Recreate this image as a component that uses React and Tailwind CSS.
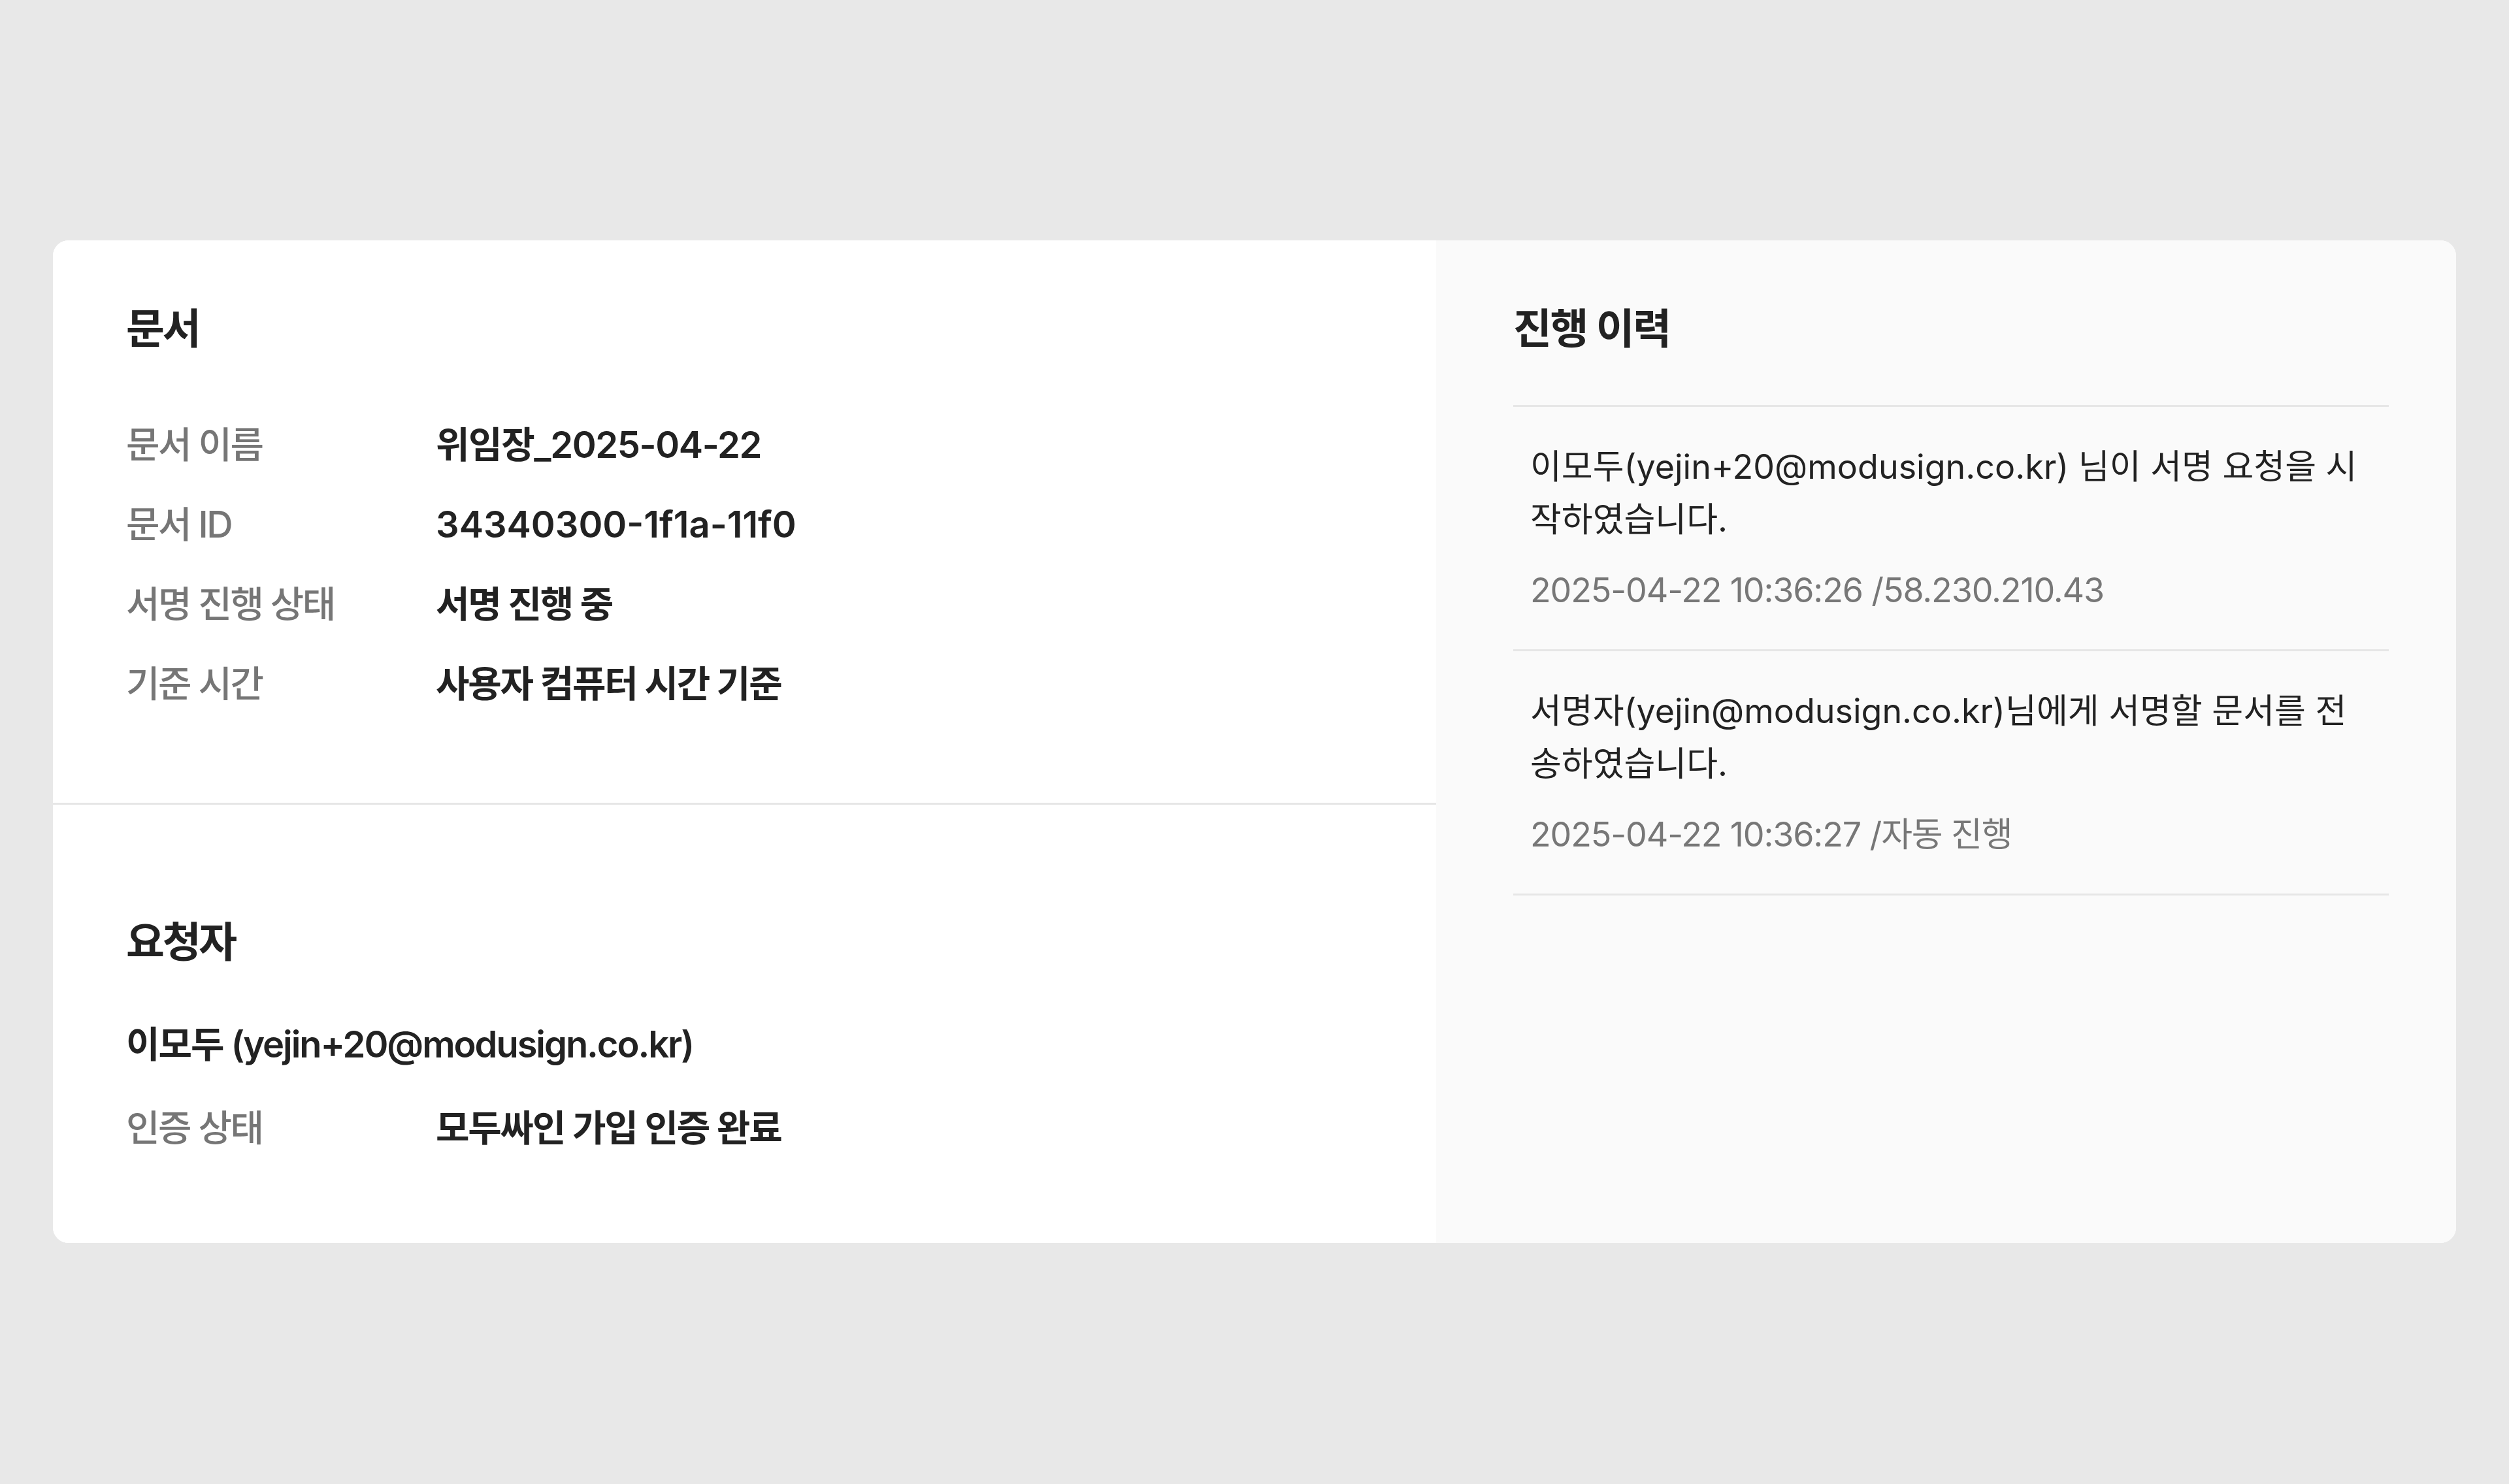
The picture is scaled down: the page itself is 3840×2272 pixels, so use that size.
import React from "react";

const FONT = { fontFamily: 'Inter, "Noto Sans CJK KR", "Noto Sans", sans-serif' };

function Row({ label, value, vt }) {
  return (
    <div className="flex items-center h-[84px]">
      <div className="w-[474px] shrink-0 text-[56px] leading-[84px] font-medium text-[#767676] tracking-[-0.045em]">{label}</div>
      <div className={"text-[56px] leading-[84px] font-semibold text-[#222222] " + vt}>{value}</div>
    </div>
  );
}

function Entry({ lines, meta, last }) {
  return (
    <div className={"border-t-[3px] border-[#e6e6e6] pt-[51px] pb-[50px] px-[26px]" + (last ? " border-b-[3px]" : "")}>
      <div className="text-[52px] leading-[81px] text-[#222222]">
        {lines.map((l, i) => (
          <div key={i} className="whitespace-nowrap">{l}</div>
        ))}
      </div>
      <div className="mt-[27px] text-[52px] leading-[81px] text-[#777777] whitespace-nowrap tracking-[-0.022em]">{meta}</div>
    </div>
  );
}

export default function App() {
  return (
    <div className="min-h-screen bg-[#e8e8e8] px-[81px] pt-[368px]" style={FONT}>
      <div className="flex rounded-[24px] overflow-hidden bg-white">
        <div className="w-[2117px] shrink-0 bg-white">
          <div className="pl-[112px] pr-[112px] pt-[87px] pb-[140px]">
            <h2 className="text-[64px] leading-[96px] font-semibold text-[#222222] tracking-[-0.05em]">문서</h2>
            <div className="mt-[88px] flex flex-col gap-[38px]">
              <Row label="문서 이름" value="위임장_2025-04-22" vt="tracking-[-0.025em]" />
              <Row label="문서 ID" value="34340300-1f1a-11f0" vt="tracking-normal" />
              <Row label="서명 진행 상태" value="서명 진행 중" vt="tracking-[-0.04em]" />
              <Row label="기준 시간" value="사용자 컴퓨터 시간 기준" vt="tracking-[-0.04em]" />
            </div>
          </div>
          <div className="h-[3px] bg-[#e6e6e6]" />
          <div className="pl-[112px] pr-[112px] pt-[162px] pb-[134px]">
            <h2 className="text-[64px] leading-[96px] font-semibold text-[#222222] tracking-[-0.05em]">요청자</h2>
            <div className="mt-[67px] text-[56px] leading-[84px] font-semibold text-[#222222] tracking-[-0.037em]">
              이모두 (yejin+20@modusign.co.kr)
            </div>
            <div className="mt-[44px]">
              <Row label="인증 상태" value="모두싸인 가입 인증 완료" vt="tracking-[-0.04em]" />
            </div>
          </div>
        </div>
        <div className="flex-1 bg-[#fafafa] pl-[118px] pr-[103px] pt-[87px]">
          <h2 className="text-[64px] leading-[96px] font-semibold text-[#222222] tracking-[-0.037em]">진행 이력</h2>
          <div className="mt-[69px]">
            <Entry
              lines={["이모두(yejin+20@modusign.co.kr) 님이 서명 요청을 시", "작하였습니다."]}
              meta="2025-04-22 10:36:26 /58.230.210.43"
            />
            <Entry
              lines={["서명자(yejin@modusign.co.kr)님에게 서명할 문서를 전", "송하였습니다."]}
              meta="2025-04-22 10:36:27 /자동 진행"
              last
            />
          </div>
        </div>
      </div>
    </div>
  );
}
